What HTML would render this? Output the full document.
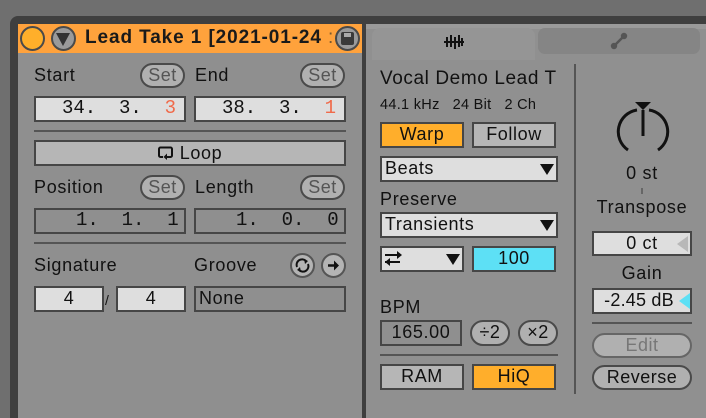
<!DOCTYPE html>
<html><head><meta charset="utf-8"><style>
*{margin:0;padding:0;box-sizing:border-box}
body{width:706px;height:418px;background:#6f6f6f;position:relative;overflow:hidden;font-family:"Liberation Sans","DejaVu Sans",sans-serif;color:#111}
.a{position:absolute}
.t{position:absolute;font-size:18px;line-height:20px;white-space:nowrap;letter-spacing:.7px}
.box{position:absolute;border:2px solid #464646;background:#dedede;font-size:18px;line-height:21px;letter-spacing:.6px}
.btn{position:absolute;border:2px solid #464646;background:#b6b6b6;font-size:18px;line-height:21px;text-align:center;letter-spacing:.6px}
.pill{position:absolute;border:2px solid #4a4a4a;background:#b0b0b0;border-radius:13px;font-size:18px;line-height:20px;text-align:center;letter-spacing:.5px}
.mono{font-family:"Liberation Mono","DejaVu Sans Mono",monospace;font-size:19px;letter-spacing:0}
.ln{position:absolute;height:2px;background:#555}
.tri{position:absolute;width:0;height:0;border-left:7px solid transparent;border-right:7px solid transparent;border-top:11px solid #111}
</style></head><body>
<div class="a" style="left:10px;top:16px;width:700px;height:402px;background:#3f3f3f;border-radius:8px 0 0 0"></div>
<div class="a" style="left:18px;top:24px;width:344px;height:394px;background:#8f8f8f"></div>
<div class="a" style="left:366px;top:24px;width:340px;height:394px;background:#909090"></div>
<div class="a" style="left:18px;top:24px;width:344px;height:29px;background:#ffa23c"></div>
<div class="a" style="left:20px;top:26px;width:25px;height:25px;border-radius:50%;background:#ffaf2a;border:2px solid #4a4a4a"></div>
<div class="a" style="left:51px;top:26px;width:25px;height:25px;border-radius:50%;background:#9a9a9a;border:2px solid #4a4a4a"></div>
<div class="a" style="left:56px;top:33px;width:0;height:0;border-left:7.5px solid transparent;border-right:7.5px solid transparent;border-top:13px solid #333"></div>
<div class="t" style="left:85px;top:28px;font-size:19px;font-weight:bold;color:#1a1a1a;letter-spacing:.9px">Lead Take 1 [2021-01-24 <span style="font-weight:normal;color:#7a5a30">:</span></div>
<div class="a" style="left:335px;top:26px;width:25px;height:25px;border-radius:50%;background:#9a9a9a;border:2px solid #4a4a4a"></div>
<div class="a" style="left:341px;top:32px;width:13px;height:13px;border-radius:2px;background:#3a3a3a"></div>
<div class="a" style="left:344px;top:33px;width:7px;height:4px;background:#aaa"></div>
<div class="t" style="left:34px;top:65px">Start</div>
<div class="pill" style="left:140px;top:63px;width:45px;height:25px;color:#555">Set</div>
<div class="t" style="left:195px;top:65px">End</div>
<div class="pill" style="left:300px;top:63px;width:45px;height:25px;color:#555">Set</div>
<div class="box mono" style="left:34px;top:96px;width:152px;height:26px;padding-left:26px">34.&nbsp; 3.&nbsp; <span style="color:#f06a4a">3</span></div>
<div class="box mono" style="left:194px;top:96px;width:152px;height:26px;padding-left:26px">38.&nbsp; 3.&nbsp; <span style="color:#f06a4a">1</span></div>
<div class="ln" style="left:34px;top:130px;width:312px"></div>
<div class="btn" style="left:34px;top:140px;width:312px;height:26px;line-height:22px"><svg width="16" height="14" viewBox="0 0 16 14" style="vertical-align:-1px;margin-right:6px"><path d="M5 11H2.5a1.5 1.5 0 0 1-1.5-1.5V3a1.5 1.5 0 0 1 1.5-1.5h10A1.5 1.5 0 0 1 14 3v6.5A1.5 1.5 0 0 1 12.5 11H8" fill="none" stroke="#111" stroke-width="2"/><path d="M9 7.5L5.5 11 9 14z" fill="#111"/></svg>Loop</div>
<div class="t" style="left:34px;top:177px">Position</div>
<div class="pill" style="left:140px;top:175px;width:45px;height:25px;color:#555">Set</div>
<div class="t" style="left:195px;top:177px">Length</div>
<div class="pill" style="left:300px;top:175px;width:45px;height:25px;color:#555">Set</div>
<div class="box mono" style="left:34px;top:208px;width:152px;height:26px;background:#8f8f8f;padding-left:40px">1.&nbsp; 1.&nbsp; 1</div>
<div class="box mono" style="left:194px;top:208px;width:152px;height:26px;background:#8f8f8f;padding-left:40px">1.&nbsp; 0.&nbsp; 0</div>
<div class="ln" style="left:34px;top:242px;width:312px"></div>
<div class="t" style="left:34px;top:255px">Signature</div>
<div class="t" style="left:194px;top:255px">Groove</div>
<div class="a" style="left:290px;top:253px;width:25px;height:25px;border-radius:50%;background:#b4b4b4;border:2px solid #555"></div>
<svg class="a" style="left:294px;top:257px" width="17" height="17" viewBox="0 0 17 17"><path d="M3 10A5.5 5.5 0 0 1 12 4M14 7A5.5 5.5 0 0 1 5 13" fill="none" stroke="#111" stroke-width="2"/><path d="M10 2l4 2-3 3z M7 15l-4-2 3-3z" fill="#111"/></svg>
<div class="a" style="left:321px;top:253px;width:25px;height:25px;border-radius:50%;background:#b4b4b4;border:2px solid #555"></div>
<svg class="a" style="left:325px;top:257px" width="17" height="17" viewBox="0 0 17 17"><path d="M3 8.5h8" stroke="#111" stroke-width="2.5"/><path d="M9 3.5l5 5-5 5z" fill="#111"/></svg>
<div class="box" style="left:34px;top:286px;width:70px;height:26px;text-align:center">4</div>
<div class="t" style="left:105px;top:290px;font-size:14px">/</div>
<div class="box" style="left:116px;top:286px;width:70px;height:26px;text-align:center">4</div>
<div class="box" style="left:194px;top:286px;width:152px;height:26px;background:#8f8f8f;padding-left:3px">None</div>
<div class="a" style="left:366px;top:24px;width:340px;height:5px;background:#9a9a9a"></div>
<div class="a" style="left:372px;top:28px;width:163px;height:32px;background:#959595;border-radius:8px 8px 0 0"></div>
<svg class="a" style="left:443px;top:34px" width="22" height="16" viewBox="0 0 22 16"><path d="M1 8h20" stroke="#111" stroke-width="2"/><path d="M4 3v10M8 1v12M12 3v12M16 1v12M19 4v8" stroke="#111" stroke-width="2"/></svg>
<div class="a" style="left:538px;top:28px;width:162px;height:26px;background:#858585;border-radius:7px"></div>
<svg class="a" style="left:609px;top:31px" width="20" height="20" viewBox="0 0 20 20"><line x1="6" y1="14" x2="14" y2="6" stroke="#555" stroke-width="2.5"/><circle cx="5" cy="15" r="3.2" fill="#555"/><circle cx="15" cy="5" r="3.2" fill="#555"/></svg>
<div class="t" style="left:380px;top:69px;font-size:19px;letter-spacing:.6px">Vocal Demo Lead T</div>
<div class="t" style="left:380px;top:95px;font-size:14.5px;letter-spacing:.3px">44.1 kHz&nbsp;&nbsp; 24 Bit&nbsp;&nbsp; 2 Ch</div>
<div class="btn" style="left:380px;top:122px;width:84px;height:26px;background:#ffae2b">Warp</div>
<div class="btn" style="left:472px;top:122px;width:84px;height:26px">Follow</div>
<div class="box" style="left:380px;top:156px;width:178px;height:26px;padding-left:3px">Beats</div>
<div class="tri" style="left:540px;top:164px"></div>
<div class="t" style="left:380px;top:189px">Preserve</div>
<div class="box" style="left:380px;top:212px;width:178px;height:26px;padding-left:3px">Transients</div>
<div class="tri" style="left:540px;top:220px"></div>
<div class="box" style="left:380px;top:246px;width:84px;height:26px"></div>
<svg class="a" style="left:384px;top:250px" width="20" height="18" viewBox="0 0 20 18"><path d="M1 5h14M1 12h15" stroke="#111" stroke-width="2"/><path d="M13 1l5 4-5 4z M6 8l-5 4 5 4z" fill="#111"/></svg>
<div class="tri" style="left:446px;top:254px"></div>
<div class="btn" style="left:472px;top:246px;width:84px;height:26px;background:#5de0f5">100</div>
<div class="t" style="left:380px;top:297px">BPM</div>
<div class="box" style="left:380px;top:320px;width:82px;height:26px;background:#8f8f8f;text-align:center">165.00</div>
<div class="pill" style="left:470px;top:320px;width:40px;height:26px">÷2</div>
<div class="pill" style="left:518px;top:320px;width:40px;height:26px">×2</div>
<div class="ln" style="left:380px;top:354px;width:178px"></div>
<div class="btn" style="left:380px;top:364px;width:84px;height:26px">RAM</div>
<div class="btn" style="left:472px;top:364px;width:84px;height:26px;background:#ffae2b">HiQ</div>
<div class="a" style="left:574px;top:64px;width:2px;height:330px;background:#555"></div>
<svg class="a" style="left:613px;top:96px" width="60" height="62" viewBox="0 0 60 62"><path d="M22 6h16l-8 8z" fill="#111"/><path d="M15 54A22 22 0 0 1 24 14M45 54A22 22 0 0 0 36 14" fill="none" stroke="#111" stroke-width="3"/><line x1="30" y1="14" x2="30" y2="40" stroke="#111" stroke-width="3"/></svg>
<div class="t" style="left:592px;top:163px;width:100px;text-align:center">0 st</div>
<div class="a" style="left:641px;top:188px;width:2px;height:6px;background:#666"></div>
<div class="t" style="left:582px;top:197px;width:120px;text-align:center">Transpose</div>
<div class="box" style="left:592px;top:231px;width:100px;height:25px;text-align:center">0 ct</div>
<div class="a" style="left:677px;top:236px;width:0;height:0;border-top:8px solid transparent;border-bottom:8px solid transparent;border-right:11px solid #b8b8b8"></div>
<div class="t" style="left:592px;top:263px;width:100px;text-align:center">Gain</div>
<div class="box" style="left:592px;top:288px;width:100px;height:26px;text-align:center;padding-right:6px;letter-spacing:.2px">-2.45 dB</div>
<div class="a" style="left:679px;top:293px;width:0;height:0;border-top:8px solid transparent;border-bottom:8px solid transparent;border-right:11px solid #5de0f5"></div>
<div class="ln" style="left:592px;top:322px;width:100px"></div>
<div class="pill" style="left:592px;top:333px;width:100px;height:25px;color:#777;border-color:#666">Edit</div>
<div class="pill" style="left:592px;top:365px;width:100px;height:25px">Reverse</div>
</body></html>
